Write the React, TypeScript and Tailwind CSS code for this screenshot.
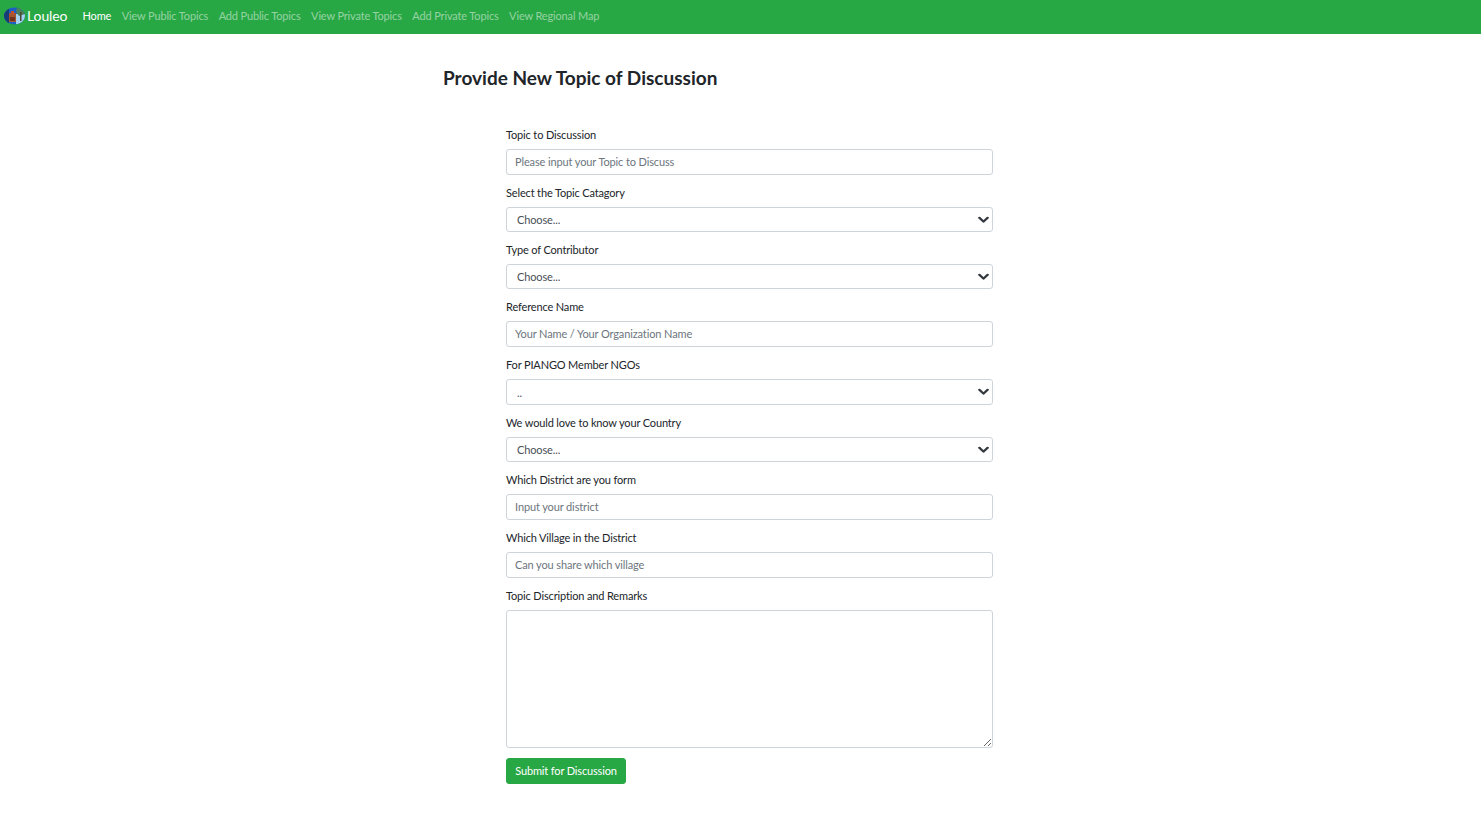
import React from "react";

const navLinks = ["View Public Topics", "Add Public Topics", "View Private Topics", "Add Private Topics", "View Regional Map"];

function Logo() {
  return (
    <svg width="21" height="18" viewBox="0 0 21 18" className="shrink-0">
      <defs>
        <clipPath id="logo-clip">
          <ellipse cx="10.5" cy="9" rx="10.5" ry="8.5" />
        </clipPath>
      </defs>
      <g clipPath="url(#logo-clip)">
        <rect width="21" height="18" fill="#1c5fc4" />
        <rect x="0" y="0" width="5" height="18" fill="#173a78" />
        <rect x="12" y="7" width="9" height="11" fill="#a5d2f2" />
        <path d="M13 0l7 3 1 4-6 2-3-4z" fill="#4d7f5c" />
        <rect x="16" y="5" width="1.5" height="9" fill="#4a4638" />
        <path d="M5 6h7v9H5z" fill="#a4552f" />
        <rect x="7" y="4" width="3" height="3" fill="#c0502f" />
        <rect x="6" y="10" width="5" height="4" fill="#6e3420" />
      </g>
    </svg>
  );
}

function Label({ children }: { children: React.ReactNode }) {
  return <label className="block text-[11px] tracking-[-0.15px] leading-[17px] text-[#212529] mb-[6px]">{children}</label>;
}

function TextField({ label, placeholder }: { label: string; placeholder: string }) {
  return (
    <div className="mb-[9px]">
      <Label>{label}</Label>
      <input
        type="text"
        placeholder={placeholder}
        className="block w-full h-[26px] px-[8px] pb-[1px] text-[11px] tracking-[-0.12px] text-[#495057] bg-white border border-[#ced4da] rounded-[3px] outline-none placeholder:text-[#6c757d]"
      />
    </div>
  );
}

function SelectField({ label, value, tall }: { label: string; value: string; tall?: boolean }) {
  return (
    <div className="mb-[9px]">
      <Label>{label}</Label>
      <div className={tall ? "relative h-[26px]" : "relative h-[25px]"}>
        <select className="block w-full h-full pl-[10px] pr-6 pt-[2px] text-[11px] tracking-[-0.12px] text-[#495057] bg-white border border-[#ced4da] rounded-[3px] appearance-none outline-none">
          <option>{value}</option>
        </select>
        <svg
          width="11"
          height="9"
          viewBox="0 0 16 16"
          preserveAspectRatio="none"
          className="absolute right-[4px] top-1/2 -translate-y-1/2 pointer-events-none"
          fill="none"
          stroke="#343a40"
          strokeWidth="3.5"
          strokeLinecap="round"
          strokeLinejoin="round"
        >
          <path d="M2 4l6 7 6-7" />
        </svg>
      </div>
    </div>
  );
}

export default function App() {
  return (
    <div className="min-h-[840px] bg-white font-['Lato','Open_Sans',sans-serif]">
      <nav className="flex items-center h-[34px] bg-[#28a745] pl-[4px]">
        <a className="flex items-center gap-[2px] mr-[15px] pb-[2px] text-[14px] tracking-[-0.1px] text-white">
          <Logo />
          <span className="pb-[2px]">Louleo</span>
        </a>
        <ul className="flex items-center gap-[10.5px] pb-[1px] text-[11px] tracking-[-0.15px]">
          <li className="text-white">Home</li>
          {navLinks.map((link) => (
            <li key={link} className="text-white/50">
              {link}
            </li>
          ))}
        </ul>
      </nav>

      <main className="pl-[443px]">
        <h2 className="pt-[30px] text-[19px] leading-[27px] font-bold text-[#212529]">Provide New Topic of Discussion</h2>

        <form className="w-[487px] ml-[63px] mt-[35px]">
          <TextField label="Topic to Discussion" placeholder="Please input your Topic to Discuss" />
          <SelectField label="Select the Topic Catagory" value="Choose..." />
          <SelectField label="Type of Contributor" value="Choose..." />
          <TextField label="Reference Name" placeholder="Your Name / Your Organization Name" />
          <SelectField label="For PIANGO Member NGOs" value=".." tall />
          <SelectField label="We would love to know your Country" value="Choose..." />
          <TextField label="Which District are you form" placeholder="Input your district" />
          <TextField label="Which Village in the District" placeholder="Can you share which village" />
          <div className="mb-[10px]">
            <Label>Topic Discription and Remarks</Label>
            <textarea className="block w-full h-[138px] px-[9px] py-1 text-[11px] bg-white border border-[#ced4da] rounded-[3px] outline-none" />
          </div>
          <button type="button" className="block h-[26px] w-[120px] text-[11px] tracking-[-0.15px] text-white bg-[#28a745] border border-[#28a745] rounded-[3px]">
            Submit for Discussion
          </button>
        </form>
      </main>
    </div>
  );
}
